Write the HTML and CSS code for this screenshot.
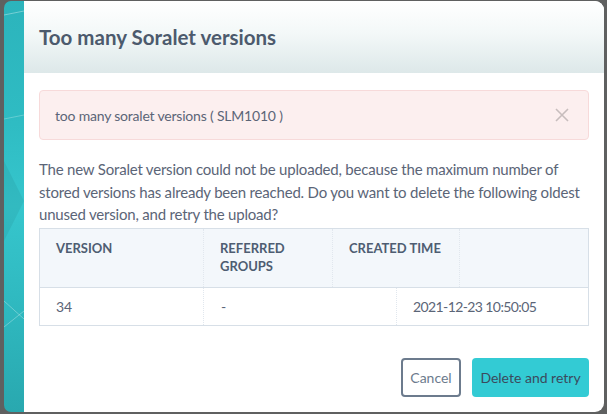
FILE: index.html
```html
<!DOCTYPE html>
<html>
<head>
<meta charset="utf-8">
<link rel="stylesheet" href="styles.css">
</head>
<body>
<div class="frame">
  <div class="strip">
    <svg class="strip-art" width="20" height="411" viewBox="0 0 20 411">
      <path d="M0 14 L20 10" stroke="rgba(255,255,255,0.35)" stroke-width="1" fill="none"/>
      <path d="M0 118 L20 114" stroke="rgba(255,255,255,0.25)" stroke-width="1" fill="none"/>
      <path d="M0 160 L20 200 L0 240 Z" fill="rgba(0,0,0,0.06)"/>
      <path d="M0 300 L20 318" stroke="rgba(255,255,255,0.3)" stroke-width="1" fill="none"/>
      <path d="M0 326 L20 310" stroke="rgba(255,255,255,0.3)" stroke-width="1" fill="none"/>
    </svg>
  </div>
  <div class="dialog">
    <div class="header">
      <h1 class="title">Too many Soralet versions</h1>
    </div>
    <div class="body">
      <div class="alert">
        <span class="alert-text">too many soralet versions ( SLM1010 )</span>
        <svg class="alert-close" width="14" height="14" viewBox="0 0 14 14">
          <path d="M1 1 L13 13 M13 1 L1 13" stroke="#c7bdbd" stroke-width="1.6" fill="none"/>
        </svg>
      </div>
      <p class="message">The new Soralet version could not be uploaded, because the maximum number of stored versions has already been reached. Do you want to delete the following oldest unused version, and retry the upload?</p>
      <div class="table">
        <div class="thead">
          <div class="th">VERSION</div>
          <div class="th">REFERRED<br>GROUPS</div>
          <div class="th">CREATED TIME</div>
          <div class="th"></div>
        </div>
        <div class="trow">
          <div class="td">34</div>
          <div class="td">-</div>
          <div class="td td-date">2021-12-23 10:50:05</div>
        </div>
      </div>
    </div>
    <div class="footer">
      <button class="btn btn-cancel">Cancel</button>
      <button class="btn btn-primary">Delete and retry</button>
    </div>
  </div>
</div>
</body>
</html>
```
FILE: styles.css
```css
html, body {
  margin: 0;
  padding: 0;
}
body {
  background: #5f6060;
  width: 607px;
  height: 414px;
  overflow: hidden;
  font-family: "Source Sans Pro", Lato, "Noto Sans", sans-serif;
}
.frame {
  margin: 1px 0 0 4px;
  width: 600px;
  height: 411px;
  display: flex;
  border-radius: 7px 9px 9px 7px;
  overflow: hidden;
}
.strip {
  width: 20px;
  flex: none;
  background: linear-gradient(180deg, #2cb4bc 0%, #2fbcc3 30%, #36c6cd 50%, #2fb8bf 75%, #29a8af 100%);
}
.strip-art {
  display: block;
}
.dialog {
  flex: 1;
  background: #fff;
  display: flex;
  flex-direction: column;
}
.header {
  height: 72px;
  background: linear-gradient(180deg, #ffffff 0%, #f3f8f8 45%, #dde8e9 100%);
  display: flex;
  align-items: center;
  padding-left: 15px;
}
.title {
  margin: 0;
  font-size: 20.5px;
  font-weight: 700;
  color: #4c5a6d;
  letter-spacing: 0;
}
.body {
  padding: 17px 15px 0 15px;
}
.alert {
  height: 48px;
  border: 1px solid #f7dada;
  background: #fcefef;
  border-radius: 4px;
  display: flex;
  align-items: center;
  justify-content: space-between;
  padding: 0 19px 0 15px;
}
.alert-text {
  font-size: 14px;
  letter-spacing: -0.2px;
  color: #5b6577;
}
.alert-close {
  display: block;
}
.message {
  margin: 18px 0 2px 0;
  font-size: 15px;
  line-height: 22.5px;
  color: #5b6577;
  letter-spacing: -0.2px;
}
.table {
  border: 1px solid #d7dfe7;
}
.thead {
  display: grid;
  grid-template-columns: 164px 129px 127px 1fr;
  background: #f3f7fb;
  border-bottom: 1px solid #d7dfe7;
  height: 58px;
}
.th {
  padding: 10px 0 0 16px;
  font-size: 13px;
  font-weight: 700;
  line-height: 18px;
  color: #4e5d72;
  border-right: 1px dotted #e1e7ee;
}
.th:last-child {
  border-right: none;
}
.trow {
  display: grid;
  grid-template-columns: 164px 193px 1fr;
  height: 37px;
}
.td {
  display: flex;
  align-items: center;
  padding-left: 16px;
  font-size: 14px;
  color: #5b6577;
  border-right: 1px dotted #e1e7ee;
}
.td:nth-child(2) {
  padding-left: 17px;
}
.td:last-child {
  border-right: none;
}
.td-date {
  letter-spacing: -0.6px;
}
.footer {
  display: flex;
  justify-content: flex-end;
  gap: 11px;
  padding: 32px 15px 0 0;
}
.btn {
  height: 39px;
  border-radius: 4px;
  font-family: inherit;
  font-size: 14px;
  padding: 0;
  cursor: pointer;
}
.btn-cancel {
  width: 60px;
  background: #fff;
  border: 2px solid #6c7b8d;
  color: #6c7b8d;
}
.btn-primary {
  width: 117px;
  background: #33cbd4;
  border: none;
  color: #3b4a5d;
}
```
